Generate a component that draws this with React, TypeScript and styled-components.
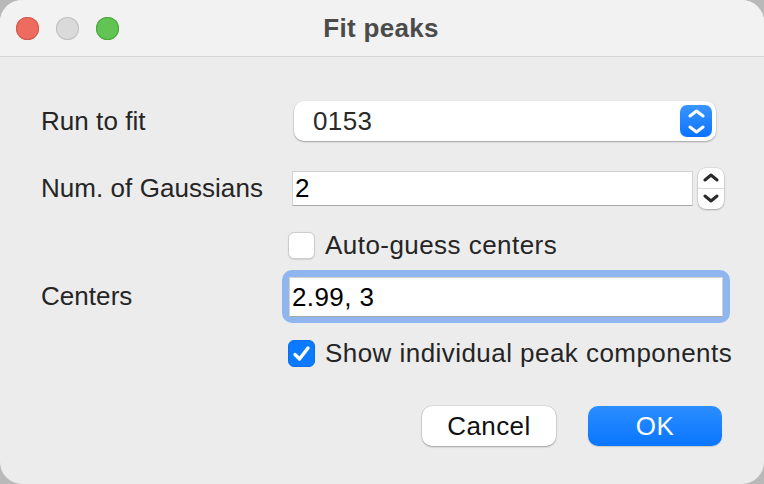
import React, { useState } from 'react';
import styled, { createGlobalStyle } from 'styled-components';

const GlobalStyle = createGlobalStyle`
  html, body {
    margin: 0;
    padding: 0;
    background: #b9b9b9;
  }
  body {
    font-family: "Liberation Sans", Arial, sans-serif;
    -webkit-font-smoothing: antialiased;
  }
`;

const Window = styled.div`
  width: 764px;
  height: 484px;
  border-radius: 22px;
  overflow: hidden;
  background: #ececec;
  display: flex;
  flex-direction: column;
  box-sizing: border-box;
`;

const TitleBar = styled.div`
  height: 56px;
  flex: none;
  background: #f2f2f2;
  border-bottom: 1px solid #d6d6d6;
  display: grid;
  grid-template-columns: 1fr auto 1fr;
  align-items: center;
  padding: 0 16px;
`;

const Lights = styled.div`
  display: flex;
  gap: 17px;
  align-items: center;
`;

const Light = styled.span<{ $fill: string; $edge: string }>`
  width: 23px;
  height: 23px;
  border-radius: 50%;
  background: ${(p) => p.$fill};
  box-shadow: inset 0 0 0 1px ${(p) => p.$edge};
`;

const Title = styled.div`
  font-size: 26px;
  font-weight: 700;
  color: #4b4b4b;
  letter-spacing: 0.3px;
  margin-right: 2px;
`;

const Body = styled.div`
  flex: 1;
  display: flex;
  flex-direction: column;
  padding: 44px 0 0 41px;
`;

const Row = styled.div<{ $top: number; $h: number }>`
  display: grid;
  grid-template-columns: 241px 1fr;
  align-items: center;
  margin-top: ${(p) => p.$top}px;
  height: ${(p) => p.$h}px;
`;

const Label = styled.div`
  font-size: 26px;
  color: #252525;
  letter-spacing: 0.05px;
`;

const Cell = styled.div<{ $ml: number }>`
  display: flex;
  align-items: center;
  margin-left: ${(p) => p.$ml}px;
`;

const Popup = styled.div`
  width: 422px;
  height: 40px;
  box-sizing: border-box;
  border-radius: 10px;
  background: #fff;
  box-shadow: 0 0.5px 0 0.5px rgba(0, 0, 0, 0.08), 0 1px 2px rgba(0, 0, 0, 0.25);
  display: flex;
  align-items: center;
  justify-content: space-between;
  padding: 0 4px 0 19px;
  font-size: 26px;
  color: #2a2a2a;
  letter-spacing: 0.4px;
`;

const PopupButton = styled.span`
  width: 32px;
  height: 32px;
  border-radius: 7px;
  background: linear-gradient(#3a95ff, #0a74ff);
  display: flex;
  align-items: center;
  justify-content: center;
`;

const Field = styled.input<{ $w: number; $h: number }>`
  width: ${(p) => p.$w}px;
  height: ${(p) => p.$h}px;
  box-sizing: border-box;
  border: 1px solid #d2d2d2;
  border-bottom-color: #a9a9a9;
  background: #fff;
  padding: 0 0 0 2px;
  margin: 0;
  font-family: "Liberation Sans", Arial, sans-serif;
  font-size: 26px;
  color: #000;
  letter-spacing: 0.4px;
  outline: none;
`;

const Stepper = styled.div`
  margin-left: 5px;
  width: 26px;
  height: 41px;
  border-radius: 8px;
  background: #fff;
  box-shadow: 0 0 0 0.5px rgba(0, 0, 0, 0.12), 0 1px 2px rgba(0, 0, 0, 0.25);
  display: grid;
  grid-template-rows: 1fr 1fr;
  overflow: hidden;
`;

const StepHalf = styled.span<{ $top?: boolean }>`
  display: flex;
  align-items: center;
  justify-content: center;
  border-bottom: ${(p) => (p.$top ? '1px solid #dcdcdc' : 'none')};
`;

const FocusRing = styled.div`
  width: 448px;
  height: 53px;
  box-sizing: border-box;
  border-radius: 10px;
  background: #8fb6ee;
  padding: 7px 7px 6px 7px;
  display: flex;
`;

const Check = styled.label`
  display: flex;
  align-items: center;
  gap: 10px;
  font-size: 26px;
  color: #252525;
  letter-spacing: 0.45px;
  cursor: default;
`;

const Box = styled.span<{ $on: boolean }>`
  width: 27px;
  height: 27px;
  box-sizing: border-box;
  border-radius: 6px;
  background: ${(p) => (p.$on ? '#0b7aff' : '#fff')};
  border: 1px solid ${(p) => (p.$on ? '#0a6fe8' : '#cdcdcd')};
  box-shadow: ${(p) => (p.$on ? 'none' : '0 0.5px 1px rgba(0,0,0,0.12)')};
  display: flex;
  align-items: center;
  justify-content: center;
`;

const Footer = styled.div`
  display: flex;
  justify-content: flex-end;
  gap: 32px;
  margin-top: 40px;
  padding-right: 42px;
`;

const Button = styled.button<{ $primary?: boolean }>`
  width: 134px;
  height: 40px;
  border-radius: 10px;
  border: none;
  font-family: "Liberation Sans", Arial, sans-serif;
  font-size: 26px;
  letter-spacing: 0.4px;
  color: ${(p) => (p.$primary ? '#fff' : '#111')};
  background: ${(p) => (p.$primary ? 'linear-gradient(#2b8eff, #0a76ff)' : '#fff')};
  box-shadow: ${(p) =>
    p.$primary
      ? '0 1px 1px rgba(0,0,0,0.15)'
      : '0 0 0 0.5px rgba(0,0,0,0.12), 0 1px 2px rgba(0,0,0,0.28)'};
  padding: 0;
`;

const Chevrons = ({ color, w, gap }: { color: string; w: number; gap: number }) => (
  <svg width={w + 4} height={14 + gap} viewBox={`0 0 ${w + 4} ${14 + gap}`}>
    <polyline
      points={`2,7 ${w / 2 + 2},2 ${w + 2},7`}
      fill="none"
      stroke={color}
      strokeWidth={3}
      strokeLinecap="round"
      strokeLinejoin="round"
    />
    <polyline
      points={`2,${7 + gap} ${w / 2 + 2},${12 + gap} ${w + 2},${7 + gap}`}
      fill="none"
      stroke={color}
      strokeWidth={3}
      strokeLinecap="round"
      strokeLinejoin="round"
    />
  </svg>
);

const Arrow = ({ up }: { up?: boolean }) => (
  <svg width="16" height="9" viewBox="0 0 16 9">
    <polyline
      points={up ? '2,7 8,2 14,7' : '2,2 8,7 14,2'}
      fill="none"
      stroke="#2b2b2b"
      strokeWidth={3}
      strokeLinecap="round"
      strokeLinejoin="round"
    />
  </svg>
);

export default function App() {
  const [gaussians, setGaussians] = useState('2');
  const [centers, setCenters] = useState('2.99, 3');
  const [autoGuess, setAutoGuess] = useState(false);
  const [showPeaks, setShowPeaks] = useState(true);

  return (
    <>
      <GlobalStyle />
      <Window>
        <TitleBar>
          <Lights>
            <Light $fill="#ee6b5f" $edge="#d65a4e" />
            <Light $fill="#dadada" $edge="#c2c2c2" />
            <Light $fill="#61c454" $edge="#50a83f" />
          </Lights>
          <Title>Fit peaks</Title>
          <span />
        </TitleBar>

        <Body>
          <Row $top={0} $h={40}>
            <Label>Run to fit</Label>
            <Cell $ml={12}>
              <Popup>
                <span>0153</span>
                <PopupButton>
                  <Chevrons color="#fff" w={13} gap={11} />
                </PopupButton>
              </Popup>
            </Cell>
          </Row>

          <Row $top={27} $h={41}>
            <Label>Num. of Gaussians</Label>
            <Cell $ml={10}>
              <Field $w={401} $h={35} value={gaussians} onChange={(e) => setGaussians(e.target.value)} />
              <Stepper>
                <StepHalf $top>
                  <Arrow up />
                </StepHalf>
                <StepHalf>
                  <Arrow />
                </StepHalf>
              </Stepper>
            </Cell>
          </Row>

          <Row $top={21} $h={27}>
            <span />
            <Cell $ml={6}>
              <Check onClick={() => setAutoGuess(!autoGuess)}>
                <Box $on={autoGuess}>
                  {autoGuess && <CheckMark />}
                </Box>
                Auto-guess centers
              </Check>
            </Cell>
          </Row>

          <Row $top={13} $h={53}>
            <Label>Centers</Label>
            <Cell $ml={0}>
              <FocusRing>
                <Field $w={434} $h={40} value={centers} onChange={(e) => setCenters(e.target.value)} />
              </FocusRing>
            </Cell>
          </Row>

          <Row $top={15} $h={28}>
            <span />
            <Cell $ml={6}>
              <Check onClick={() => setShowPeaks(!showPeaks)}>
                <Box $on={showPeaks}>
                  {showPeaks && <CheckMark />}
                </Box>
                Show individual peak components
              </Check>
            </Cell>
          </Row>

          <Footer>
            <Button>Cancel</Button>
            <Button $primary>OK</Button>
          </Footer>
        </Body>
      </Window>
    </>
  );
}

function CheckMark() {
  return (
    <svg width="19" height="17" viewBox="0 0 19 17">
      <polyline
        points="3,9.5 7.5,14 16,3"
        fill="none"
        stroke="#fff"
        strokeWidth={3.4}
        strokeLinecap="round"
        strokeLinejoin="round"
      />
    </svg>
  );
}
